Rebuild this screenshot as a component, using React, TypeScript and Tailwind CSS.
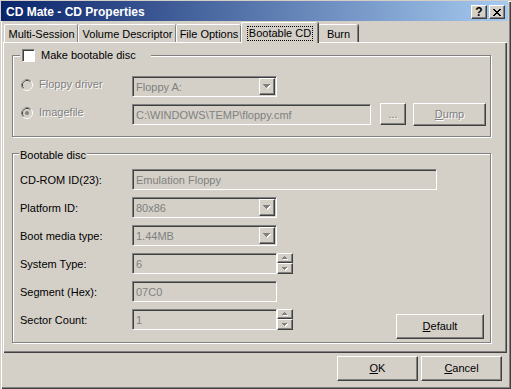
import React from "react";

// classic win2k bevels
const sunken =
  "border border-[#808080] border-b-white border-r-white shadow-[inset_1px_1px_0_#404040]";
const raised =
  "border border-white border-r-[#404040] border-b-[#404040] shadow-[inset_-1px_-1px_0_#808080]";
const dim = "text-[#808080] [text-shadow:1px_1px_0_#fff]";

function DropArrow() {
  return (
    <svg width="8" height="5" viewBox="0 0 8 5">
      <path d="M1 1h7v1H1zM2 2h5v1H2zM3 3h3v1H3zM4 4h1v1H4z" fill="#fff" />
      <path d="M0 0h7v1H0zM1 1h5v1H1zM2 2h3v1H2zM3 3h1v1H3z" fill="#808080" />
    </svg>
  );
}

function SpinArrow({ up }: { up?: boolean }) {
  const g = up ? "M2 0h1v1H2zM1 1h3v1H1zM0 2h5v1H0z" : "M0 0h5v1H0zM1 1h3v1H1zM2 2h1v1H2z";
  const w = up ? "M3 1h1v1H3zM2 2h3v1H2zM1 3h5v1H1z" : "M1 1h5v1H1zM2 2h3v1H2zM3 3h1v1H3z";
  return (
    <svg width="6" height="4" viewBox="0 0 6 4">
      <path d={w} fill="#fff" />
      <path d={g} fill="#808080" />
    </svg>
  );
}

function Radio({ checked }: { checked?: boolean }) {
  return (
    <svg width="12" height="12" viewBox="0 0 12 12">
      <circle cx="6" cy="6" r="5.5" fill="none" stroke="#fff" />
      <path d="M9.89 2.11A5.5 5.5 0 0 0 2.11 9.89" fill="none" stroke="#808080" />
      <circle cx="6" cy="6" r="4.5" fill="none" stroke="#d4d0c8" />
      <path d="M9.18 2.82A4.5 4.5 0 0 0 2.82 9.18" fill="none" stroke="#404040" />
      <circle cx="6" cy="6" r="4" fill="#d4d0c8" />
      {checked && <circle cx="6" cy="6" r="2" fill="#808080" />}
    </svg>
  );
}

function Combo({ value }: { value: string }) {
  return (
    <div className={`flex h-[21px] w-[145px] items-center ${sunken}`}>
      <span className="flex-1 pl-[3px] pt-[1px] text-[#808080]">{value}</span>
      <div className={`mr-[1px] flex h-[17px] w-[16px] items-center justify-center ${raised}`}>
        <DropArrow />
      </div>
    </div>
  );
}

function Edit({ value, className = "" }: { value: string; className?: string }) {
  return (
    <div className={`flex h-[21px] items-center pl-[3px] pt-[1px] text-[#808080] ${sunken} ${className}`}>
      {value}
    </div>
  );
}

function Spin({ value }: { value: string }) {
  return (
    <div className="flex">
      <Edit value={value} className="w-[145px]" />
      <div className="flex w-[16px] flex-col">
        <div className={`flex h-[10px] items-center justify-center ${raised}`}>
          <SpinArrow up />
        </div>
        <div className={`flex h-[11px] items-center justify-center ${raised}`}>
          <SpinArrow />
        </div>
      </div>
    </div>
  );
}

function Tab({ label, w }: { label: string; w: string }) {
  return (
    <div
      className={`mt-[2px] flex h-[18px] ${w} justify-center rounded-t-[2px] border-l border-t border-white pt-[3px] shadow-[inset_-1px_0_0_#808080,1px_0_0_#404040]`}
    >
      {label}
    </div>
  );
}

function Row({ label, children }: { label: string; children: React.ReactNode }) {
  return (
    <div className="flex h-[21px] items-center">
      <span className="w-[112px] pt-[1px]">{label}</span>
      {children}
    </div>
  );
}

export default function App() {
  return (
    <div className="h-[389px] w-[511px] overflow-hidden bg-[#d4d0c8] font-['Liberation_Sans',Arial,sans-serif] text-[11px] leading-[13px] text-black shadow-[inset_1px_1px_0_#d4d0c8,inset_2px_2px_0_#fff,inset_-1px_-1px_0_#404040,inset_-2px_-2px_0_#808080]">
      {/* Title bar */}
      <div className="ml-[1px] flex h-[20px] w-[507px] translate-y-[1px] items-start justify-between bg-[linear-gradient(to_right,#0a246a,#a6caf0)] pl-[5px] pr-[3px]">
        <span className="pt-[4px] text-[12px] font-bold leading-[14px] text-white">CD Mate - CD Properties</span>
        <div className="mt-[4px] flex gap-[2px]">
          <div className={`flex h-[14px] w-[16px] items-center justify-center bg-[#d4d0c8] text-[12px] font-bold leading-[12px] ${raised}`}>
            ?
          </div>
          <div className={`flex h-[14px] w-[16px] items-center justify-center bg-[#d4d0c8] ${raised}`}>
            <svg width="8" height="7" viewBox="0 0 8 7">
              <path
                d="M0 0h2v1H0zM6 0h2v1H6zM1 1h2v1H1zM5 1h2v1H5zM2 2h4v1H2zM3 3h2v1H3zM2 4h4v1H2zM1 5h2v1H1zM5 5h2v1H5zM0 6h2v1H0zM6 6h2v1H6z"
                fill="#000"
              />
            </svg>
          </div>
        </div>
      </div>

      {/* Tabs */}
      <div className="ml-[4px] mt-[2px] flex h-[20px]">
        <Tab label="Multi-Session" w="w-[74px]" />
        <Tab label="Volume Descriptor" w="w-[98px]" />
        <Tab label="File Options" w="w-[65px]" />
        <div className="relative z-10 flex h-[21px] w-[77px] justify-center rounded-t-[2px] border-l border-t border-white bg-[#d4d0c8] pt-[3px] shadow-[inset_-1px_0_0_#808080,1px_0_0_#404040]">
          <span className="h-[15px] border border-dotted border-black px-[1px] leading-[13px]">Bootable CD</span>
        </div>
        <Tab label="Burn" w="w-[40px]" />
      </div>

      {/* Panel */}
      <div className="ml-[3px] h-[311px] w-[504px] pl-[9px] pt-[13px] shadow-[inset_1px_1px_0_#fff,inset_-1px_-1px_0_#404040,inset_-2px_-2px_0_#808080]">
        {/* Group 1 */}
        <div className="relative h-[82px] w-[479px] border border-[#808080] pl-[7px] pt-[20px] shadow-[inset_1px_1px_0_#fff,1px_1px_0_#fff]">
          <div className="absolute left-[7px] top-[-7px] flex h-[13px] w-[131px] items-center gap-[6px] bg-[#d4d0c8] pl-[2px]">
            <div className={`h-[13px] w-[13px] bg-white ${sunken}`} />
            <span>Make bootable disc</span>
          </div>

          <div className="flex h-[21px] items-start">
            <div className={`mt-[2px] flex w-[112px] items-center gap-[6px] pl-[1px] ${dim}`}>
              <Radio />
              <span>Floppy driver</span>
            </div>
            <Combo value="Floppy A:" />
          </div>

          <div className="mt-[6px] flex h-[23px] items-start">
            <div className={`mt-[3px] flex w-[112px] items-center gap-[6px] pl-[1px] ${dim}`}>
              <Radio checked />
              <span>Imagefile</span>
            </div>
            <Edit value="C:\WINDOWS\TEMP\floppy.cmf" className="mt-[1px] w-[239px]" />
            <div className={`ml-[9px] flex h-[22px] w-[26px] items-center justify-center ${raised} ${dim}`}>...</div>
            <div className={`ml-[7px] flex h-[23px] w-[73px] items-center justify-center ${raised} ${dim}`}>
              <span>
                <u>D</u>ump
              </span>
            </div>
          </div>
        </div>

        {/* Group 2 */}
        <div className="relative mt-[16px] h-[190px] w-[479px] border border-[#808080] pl-[7px] pt-[15px] shadow-[inset_1px_1px_0_#fff,1px_1px_0_#fff]">
          <span className="absolute left-[6px] top-[-5px] bg-[#d4d0c8] px-[1px]">Bootable disc</span>

          <div className="flex flex-col gap-[7px]">
            <Row label="CD-ROM ID(23):">
              <Edit value="Emulation Floppy" className="w-[305px]" />
            </Row>
            <Row label="Platform ID:">
              <Combo value="80x86" />
            </Row>
            <Row label="Boot media type:">
              <Combo value="1.44MB" />
            </Row>
            <Row label="System Type:">
              <Spin value="6" />
            </Row>
            <Row label="Segment (Hex):">
              <Edit value="07C0" className="w-[145px]" />
            </Row>
            <div className="flex h-[21px] items-start">
              <span className="flex h-[21px] w-[112px] items-center pt-[1px]">Sector Count:</span>
              <Spin value="1" />
              <div className={`ml-[103px] mt-[5px] flex h-[25px] w-[88px] shrink-0 items-center justify-center ${raised}`}>
                <span>
                  <u>D</u>efault
                </span>
              </div>
            </div>
          </div>
        </div>
      </div>

      {/* Dialog buttons */}
      <div className="mt-[3px] flex justify-end gap-[3px] pr-[9px]">
        <div className={`flex h-[25px] w-[81px] items-center justify-center ${raised}`}>
          <span>
            <u>O</u>K
          </span>
        </div>
        <div className={`flex h-[25px] w-[81px] items-center justify-center ${raised}`}>
          <span>
            <u>C</u>ancel
          </span>
        </div>
      </div>
    </div>
  );
}
